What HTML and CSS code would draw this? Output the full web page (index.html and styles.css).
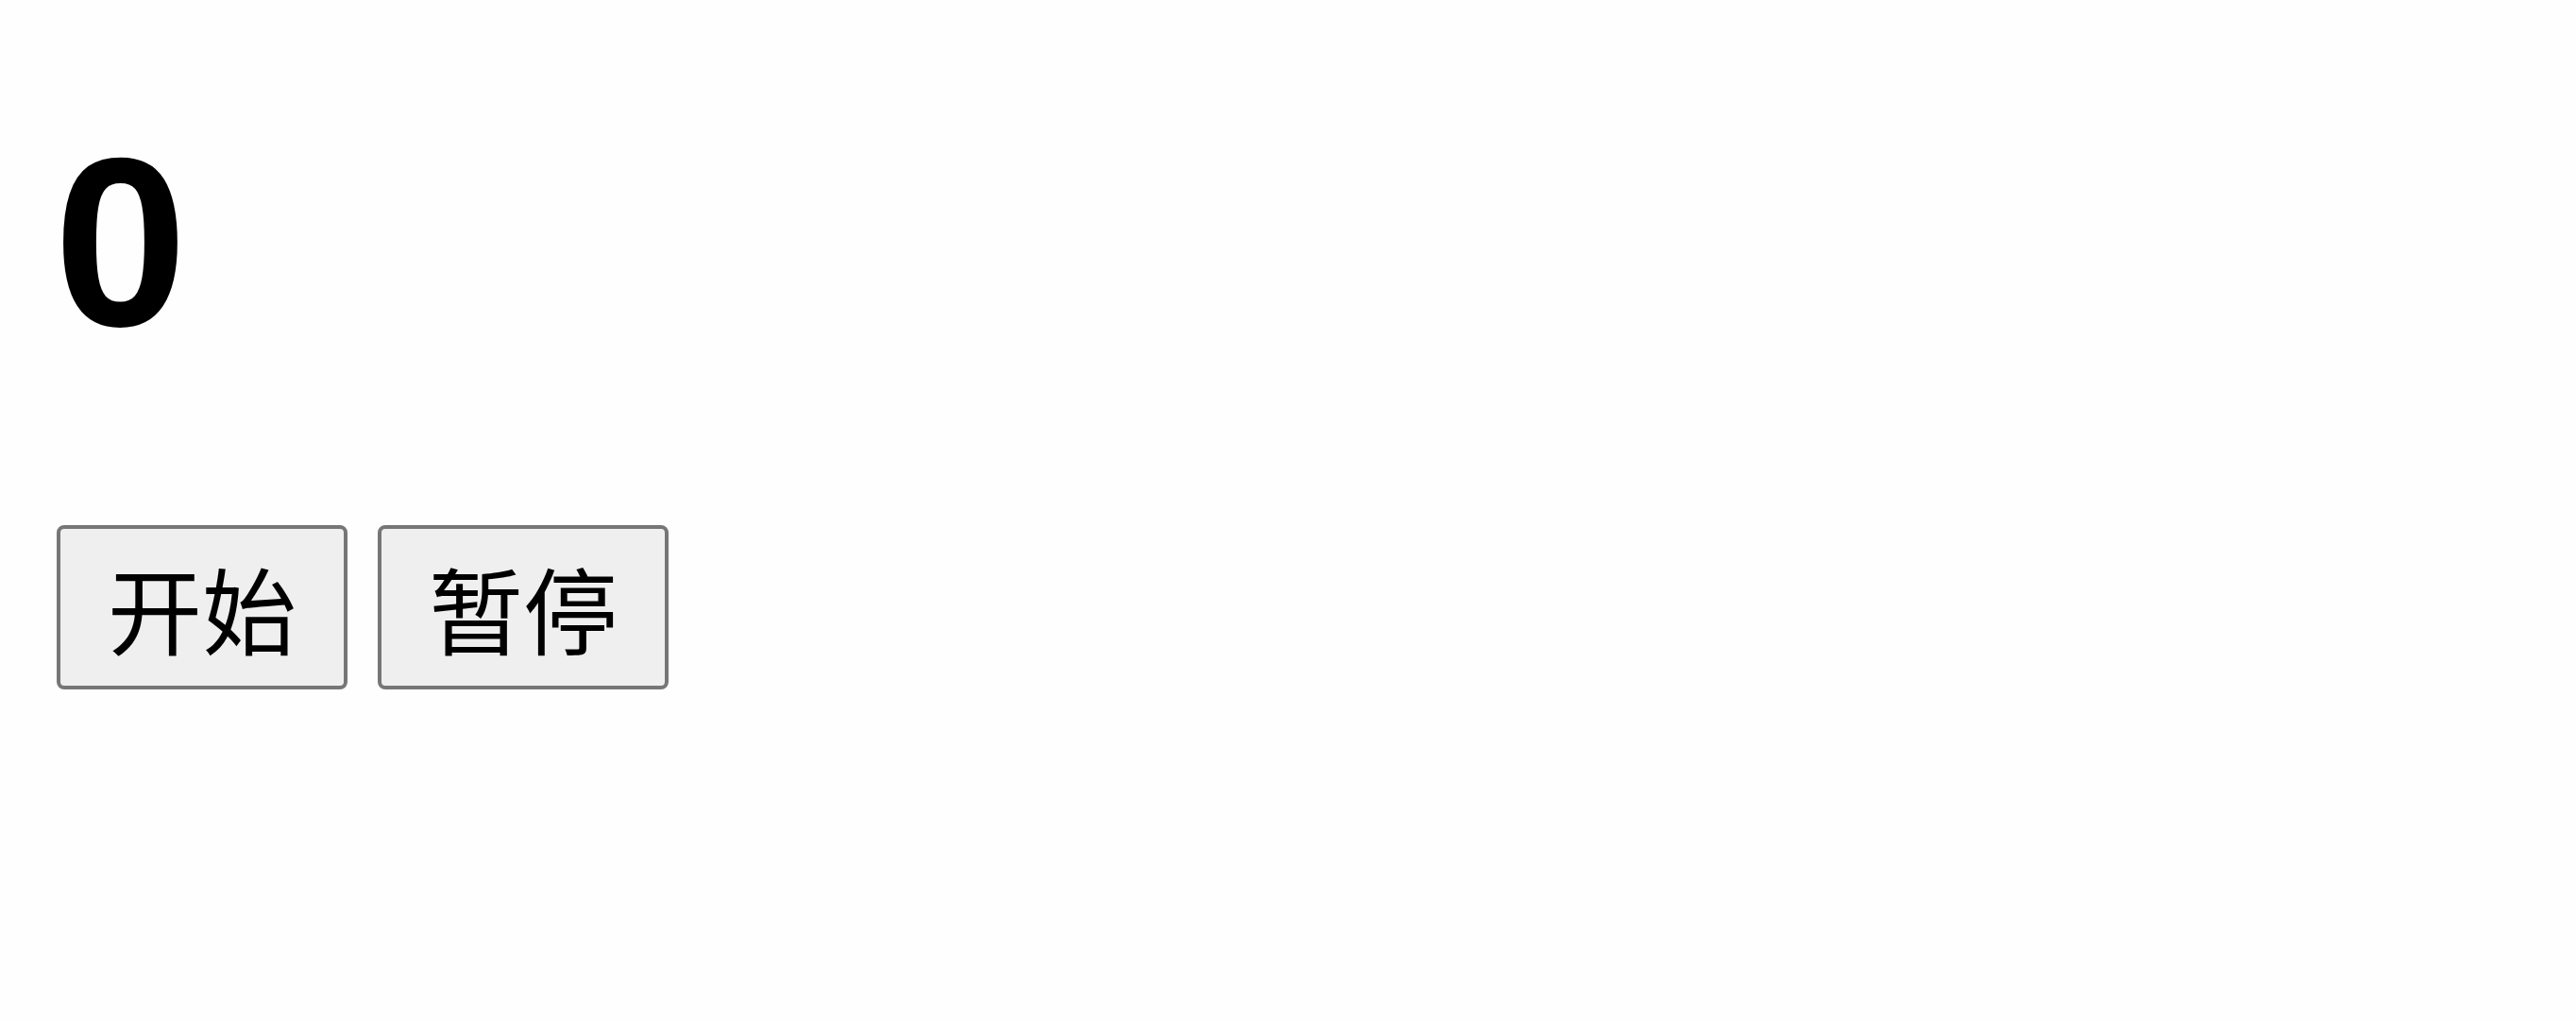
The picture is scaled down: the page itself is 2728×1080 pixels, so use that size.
FILE: index.html
```html
<!DOCTYPE html>
<html lang="zh">
<head>
<meta charset="utf-8">
<title>计数器</title>
<link rel="stylesheet" href="styles.css">
</head>
<body>
<div class="app">
  <h1 class="count">0</h1>
  <div class="controls">
    <button class="btn" type="button">开始</button>
    <button class="btn" type="button">暂停</button>
  </div>
</div>
</body>
</html>
```

FILE: styles.css
```css
html, body {
  margin: 0;
  padding: 0;
  background: #fefefe;
}

.app {
  padding: 130px 0 0 60px;
}

.count {
  margin: 0 0 0 -3px;
  font-family: "Liberation Sans", Arial, sans-serif;
  font-weight: bold;
  font-size: 254px;
  line-height: 1;
  color: #000;
}

.controls {
  display: flex;
  gap: 32px;
  margin-top: 172px;
}

.btn {
  box-sizing: border-box;
  height: 174px;
  padding: 0 50px;
  margin: 0;
  border: 4px solid #767676;
  border-radius: 8px;
  background: #efefef;
  color: #000;
  font-family: "Noto Sans CJK SC", "Noto Sans", sans-serif;
  font-size: 100px;
  line-height: 160px;
  white-space: nowrap;
}
```
